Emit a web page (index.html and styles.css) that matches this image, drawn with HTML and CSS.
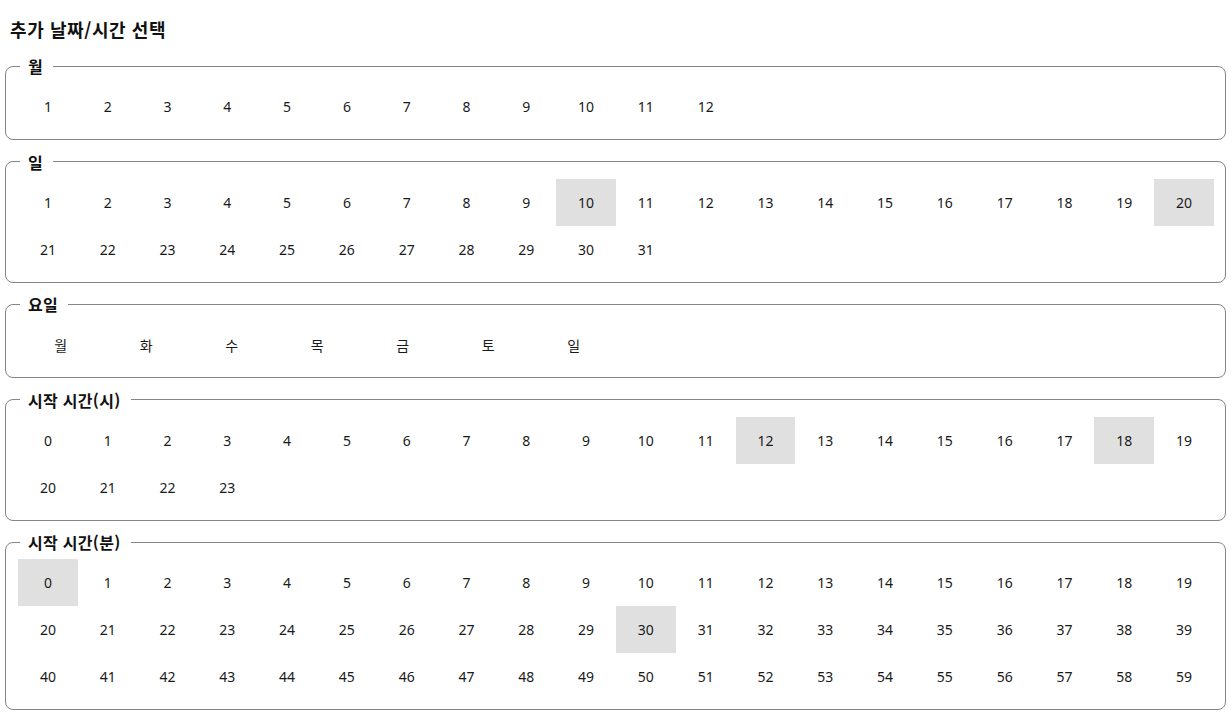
FILE: index.html
```html
<!DOCTYPE html>
<html lang="ko">

<head>
    <meta charset="UTF-8">
    <title>추가 날짜/시간 선택</title>
    <link rel="stylesheet" href="styles.css">
</head>

<body>
    <h1 class="title">추가 날짜/시간 선택</h1>

    <fieldset class="group">
        <legend>월</legend>
        <div class="cells">
            <span>1</span><span>2</span><span>3</span><span>4</span><span>5</span><span>6</span>
            <span>7</span><span>8</span><span>9</span><span>10</span><span>11</span><span>12</span>
        </div>
    </fieldset>

    <fieldset class="group">
        <legend>일</legend>
        <div class="cells">
            <span>1</span><span>2</span><span>3</span><span>4</span><span>5</span>
            <span>6</span><span>7</span><span>8</span><span>9</span><span class="on">10</span>
            <span>11</span><span>12</span><span>13</span><span>14</span><span>15</span>
            <span>16</span><span>17</span><span>18</span><span>19</span><span class="on">20</span>
            <span>21</span><span>22</span><span>23</span><span>24</span><span>25</span>
            <span>26</span><span>27</span><span>28</span><span>29</span><span>30</span>
            <span>31</span>
        </div>
    </fieldset>

    <fieldset class="group">
        <legend>요일</legend>
        <div class="cells week">
            <span>월</span><span>화</span><span>수</span><span>목</span><span>금</span><span>토</span><span>일</span>
        </div>
    </fieldset>

    <fieldset class="group">
        <legend>시작 시간(시)</legend>
        <div class="cells">
            <span>0</span><span>1</span><span>2</span><span>3</span><span>4</span>
            <span>5</span><span>6</span><span>7</span><span>8</span><span>9</span>
            <span>10</span><span>11</span><span class="on">12</span><span>13</span><span>14</span>
            <span>15</span><span>16</span><span>17</span><span class="on">18</span><span>19</span>
            <span>20</span><span>21</span><span>22</span><span>23</span>
        </div>
    </fieldset>

    <fieldset class="group">
        <legend>시작 시간(분)</legend>
        <div class="cells">
            <span class="on">0</span><span>1</span><span>2</span><span>3</span><span>4</span>
            <span>5</span><span>6</span><span>7</span><span>8</span><span>9</span>
            <span>10</span><span>11</span><span>12</span><span>13</span><span>14</span>
            <span>15</span><span>16</span><span>17</span><span>18</span><span>19</span>
            <span>20</span><span>21</span><span>22</span><span>23</span><span>24</span>
            <span>25</span><span>26</span><span>27</span><span>28</span><span>29</span>
            <span class="on">30</span><span>31</span><span>32</span><span>33</span><span>34</span>
            <span>35</span><span>36</span><span>37</span><span>38</span><span>39</span>
            <span>40</span><span>41</span><span>42</span><span>43</span><span>44</span>
            <span>45</span><span>46</span><span>47</span><span>48</span><span>49</span>
            <span>50</span><span>51</span><span>52</span><span>53</span><span>54</span>
            <span>55</span><span>56</span><span>57</span><span>58</span><span>59</span>
        </div>
    </fieldset>
</body>

</html>
```

FILE: styles.css
```css
* {
    margin: 0;
    padding: 0;
    box-sizing: border-box;
}

body {
    padding: 17px 6px 0 5px;
    background: #fff;
    color: #1a1a1a;
    font-family: "Noto Sans", "Noto Sans CJK KR", sans-serif;
    font-size: 14px;
}

.title {
    padding-left: 5px;
    font-family: "Noto Sans CJK KR", sans-serif;
    font-size: 18px;
    font-weight: bold;
    letter-spacing: 0.6px;
    line-height: 24px;
    color: #111;
    margin-bottom: 14px;
}

.group {
    border: 1px solid #858585;
    border-radius: 8px;
    padding: 6px 12px 9px 12px;
    margin-bottom: 10.5px;
    min-width: 0;
}

.group legend {
    margin-left: 2px;
    padding: 0 10px 0 8px;
    font-family: "Noto Sans CJK KR", sans-serif;
    font-size: 16px;
    font-weight: bold;
    letter-spacing: 0.3px;
    line-height: 22px;
    color: #111;
}

.cells {
    display: grid;
    grid-template-columns: repeat(20, 59.8px);
    grid-auto-rows: 47px;
}

.cells span {
    display: flex;
    align-items: center;
    justify-content: center;
}

.cells .on {
    background-color: #e0e0e0;
}

.week {
    grid-template-columns: repeat(7, 85.5px);
}

.week span {
    font-family: "Noto Sans CJK KR", sans-serif;
}
```
